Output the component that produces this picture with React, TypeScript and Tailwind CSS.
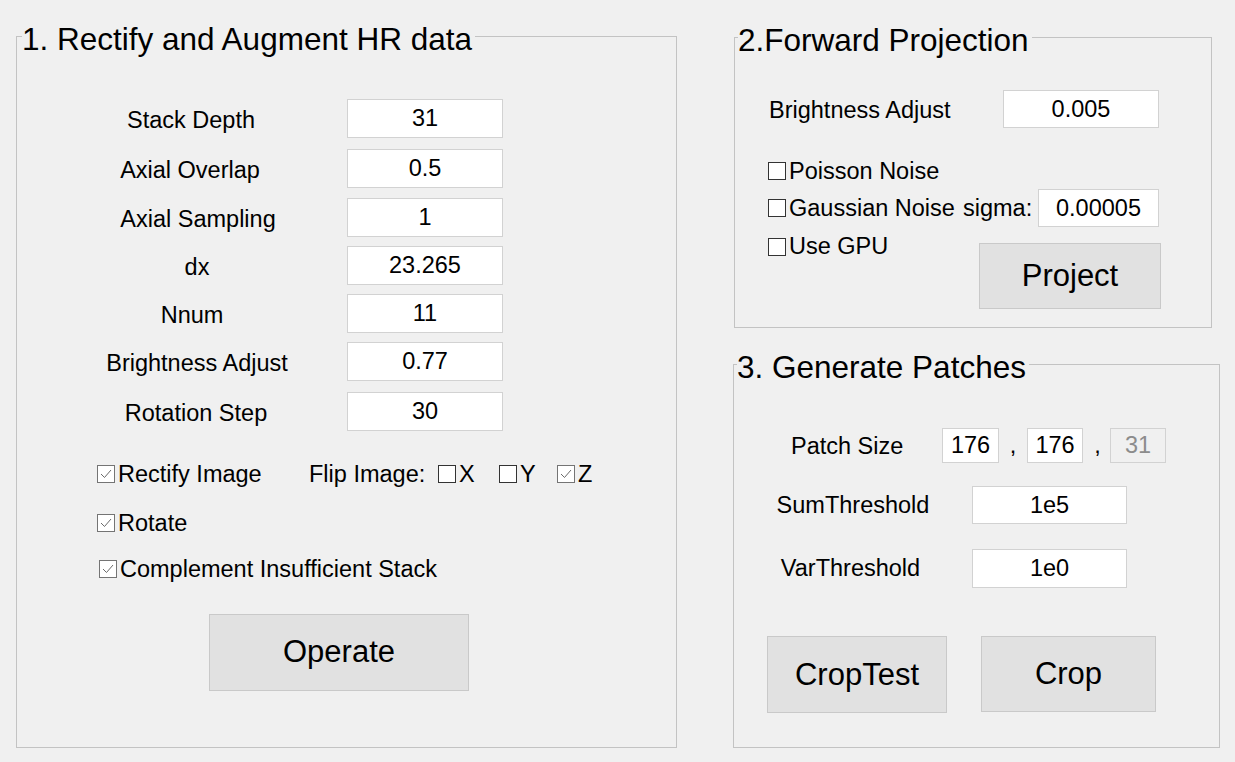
import React from "react";

const FONT = "font-['Liberation_Sans',Arial,sans-serif]";

const HR_ROWS = [
  { label: "Stack Depth", value: "31", cls: "pr-[12px]", mt: "" },
  { label: "Axial Overlap", value: "0.5", cls: "pr-[14px]", mt: "mt-[11px]" },
  { label: "Axial Sampling", value: "1", cls: "pl-[2px]", mt: "mt-[9px]" },
  { label: "dx", value: "23.265", cls: "", mt: "mt-[9px]" },
  { label: "Nnum", value: "11", cls: "pr-[10px]", mt: "mt-[9px]" },
  { label: "Brightness Adjust", value: "0.77", cls: "", mt: "mt-[9px]" },
  { label: "Rotation Step", value: "30", cls: "pr-[2px]", mt: "mt-[10px]" },
];

function Box({ checked }: { checked?: boolean }) {
  return (
    <svg width="18" height="18" viewBox="0 0 18 18" className="shrink-0">
      <rect
        x="0.5"
        y="0.5"
        width="17"
        height="17"
        fill="#ffffff"
        stroke={checked ? "#747474" : "#333333"}
      />
      {checked && (
        <polyline
          points="4,9 7.5,12.5 14,5"
          fill="none"
          stroke="#6a6a6a"
          strokeWidth="1"
        />
      )}
    </svg>
  );
}

function Check({
  label,
  checked,
  className = "",
}: {
  label: string;
  checked?: boolean;
  className?: string;
}) {
  return (
    <label className={`flex items-center ${className}`}>
      <Box checked={checked} />
      <span className="ml-[3px] whitespace-nowrap">{label}</span>
    </label>
  );
}

function Field({ value, className = "" }: { value: string; className?: string }) {
  return (
    <input
      readOnly
      value={value}
      className={`border border-[#d2d2d2] bg-white text-center text-black outline-none ${className}`}
    />
  );
}

function Button({ label, className = "" }: { label: string; className?: string }) {
  return (
    <button
      type="button"
      className={`border border-[#c9c9c9] bg-[#e1e1e1] text-[31px] text-black ${className}`}
    >
      {label}
    </button>
  );
}

function Panel({
  title,
  className = "",
  legend = "ml-[3px]",
  children,
}: {
  title: string;
  className?: string;
  legend?: string;
  children: React.ReactNode;
}) {
  return (
    <fieldset className={`border border-[#c3c3c3] ${className}`}>
      <legend
        className={`pr-[3px] pt-[6px] text-[31.5px] leading-[35px] whitespace-nowrap ${legend}`}
      >
        {title}
      </legend>
      {children}
    </fieldset>
  );
}

export default function App() {
  return (
    <div
      className={`flex h-[762px] w-[1235px] bg-[#f0f0f0] pl-[16px] pt-[16px] text-[23.5px] text-black ${FONT}`}
    >
      {/* 1. rectify */}
      <Panel
        title="1. Rectify and Augment HR data"
        legend="ml-[5px]"
        className="h-[732px] w-[661px] shrink-0"
      >
        <div className="mt-[42px] flex flex-col">
          {HR_ROWS.map((r) => (
            <div key={r.label} className={`flex items-center pl-[80px] ${r.mt}`}>
              <span className={`w-[200px] pt-[4px] text-center ${r.cls}`}>{r.label}</span>
              <Field value={r.value} className="ml-[50px] h-[39px] w-[156px]" />
            </div>
          ))}
        </div>

        <div className="mt-[30px] flex h-[27px] items-center pl-[80px]">
          <Check label="Rectify Image" checked className="w-[212px]" />
          <span className="w-[129px] whitespace-nowrap">Flip Image:</span>
          <Check label="X" className="w-[61px]" />
          <Check label="Y" className="w-[58px]" />
          <Check label="Z" checked />
        </div>
        <div className="mt-[22px] flex h-[27px] items-center pl-[80px]">
          <Check label="Rotate" checked />
        </div>
        <div className="mt-[19px] flex h-[27px] items-center pl-[82px]">
          <Check label="Complement Insufficient Stack" checked />
        </div>

        <Button label="Operate" className="ml-[192px] mt-[31px] h-[77px] w-[260px]" />
      </Panel>

      <div className="ml-[56px] flex flex-col">
        {/* 2. forward projection */}
        <Panel title="2.Forward Projection" className="ml-[1px] mt-[1px] h-[311px] w-[478px]">
          <div className="mt-[32px] flex items-center pl-[34px]">
            <span className="w-[234px] pt-[3px] whitespace-nowrap">Brightness Adjust</span>
            <Field value="0.005" className="h-[38px] w-[156px]" />
          </div>
          <div className="mt-[29px] flex h-[28px] items-center pl-[33px]">
            <Check label="Poisson Noise" />
          </div>
          <div className="mt-[4px] flex h-[38px] items-center pl-[33px]">
            <Check label="Gaussian Noise" className="w-[195px]" />
            <span className="w-[75px] whitespace-nowrap">sigma:</span>
            <Field value="0.00005" className="h-[38px] w-[121px]" />
          </div>
          <div className="mt-[5px] flex items-start pl-[33px]">
            <div className="flex h-[29px] w-[211px] items-center">
              <Check label="Use GPU" />
            </div>
            <Button label="Project" className="mt-[11px] h-[66px] w-[182px]" />
          </div>
        </Panel>

        {/* 3. patches */}
        <Panel title="3. Generate Patches" className="mt-[16px] h-[404px] w-[487px]">
          <div className="mt-[42px] flex items-center pl-[57px]">
            <span className="w-[151px] pt-[2px] whitespace-nowrap">Patch Size</span>
            <Field value="176" className="h-[35px] w-[57px]" />
            <span className="w-[28px] text-center">,</span>
            <Field value="176" className="h-[35px] w-[56px]" />
            <span className="w-[27px] pl-[2px] text-center">,</span>
            <input
              readOnly
              disabled
              value="31"
              className="h-[35px] w-[56px] border border-[#d2d2d2] bg-[#f0f0f0] text-center text-[#8c8c8c] outline-none"
            />
          </div>
          <div className="mt-[22px] flex items-center pl-[19px]">
            <span className="w-[200px] text-center whitespace-nowrap">SumThreshold</span>
            <Field value="1e5" className="ml-[19px] h-[38px] w-[155px]" />
          </div>
          <div className="mt-[25px] flex items-center pl-[19px]">
            <span className="w-[200px] pr-[5px] text-center whitespace-nowrap">VarThreshold</span>
            <Field value="1e0" className="ml-[19px] h-[39px] w-[155px]" />
          </div>
          <div className="mt-[48px] flex items-start gap-[34px] pl-[33px]">
            <Button label="CropTest" className="h-[77px] w-[180px]" />
            <Button label="Crop" className="h-[76px] w-[175px]" />
          </div>
        </Panel>
      </div>
    </div>
  );
}
